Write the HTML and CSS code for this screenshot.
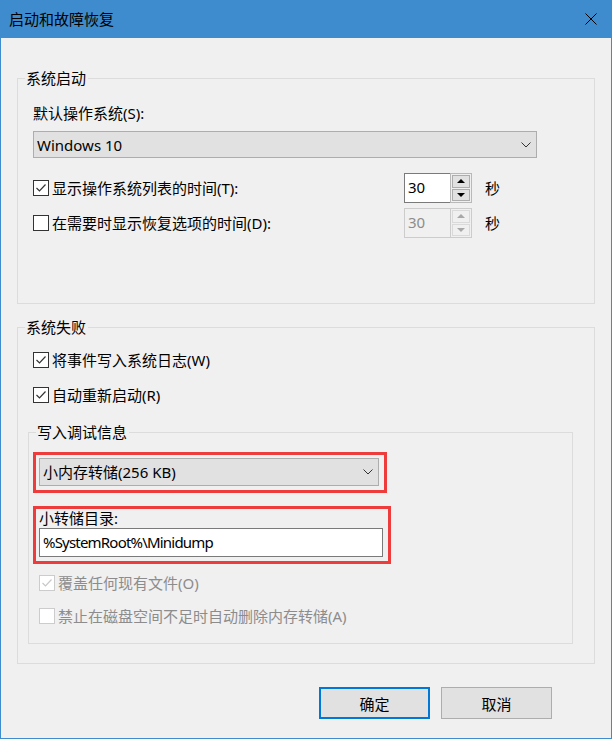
FILE: index.html
```html
<!DOCTYPE html>
<html lang="zh-CN">
<head>
<meta charset="utf-8">
<title>启动和故障恢复</title>
<link rel="stylesheet" href="styles.css">
</head>
<body>
<div class="window">
  <div class="titlebar">
    <span class="title">启动和故障恢复</span>
    <svg class="close" width="12" height="12" viewBox="0 0 12 12"><path d="M0.5 0.5L11.5 11.5M11.5 0.5L0.5 11.5" stroke="#000" stroke-width="1" fill="none"/></svg>
  </div>
  <div class="content">
    <section class="group">
      <div class="group-head"><span class="seg-l"></span><span class="legend">系统启动</span><span class="seg-r"></span></div>
      <div class="group-body g1-body">
        <div class="text-label">默认操作系统(S):</div>
        <div class="combo combo-os">
          <span>Windows 10</span>
          <svg class="chev" width="10" height="6" viewBox="0 0 10 6"><polyline points="0.5,0.5 5,5 9.5,0.5" stroke="#333" stroke-width="1" fill="none"/></svg>
        </div>
        <div class="spin-row first">
          <label class="cb">
            <span class="box"><svg width="14" height="14" viewBox="0 0 14 14"><polyline points="2.5,7 5.5,10 11.5,3.5" stroke="#333" stroke-width="1.2" fill="none"/></svg></span>
            <span>显示操作系统列表的时间(T):</span>
          </label>
          <div class="spinner">
            <div class="spin-text">30</div>
            <div class="spin-btns">
              <div class="spin-btn"><svg width="8" height="4" viewBox="0 0 8 4"><polygon points="0,4 4,0 8,4" fill="#000"/></svg></div>
              <div class="spin-btn"><svg width="8" height="4" viewBox="0 0 8 4"><polygon points="0,0 8,0 4,4" fill="#000"/></svg></div>
            </div>
          </div>
          <span class="unit">秒</span>
        </div>
        <div class="spin-row second">
          <label class="cb">
            <span class="box"></span>
            <span>在需要时显示恢复选项的时间(D):</span>
          </label>
          <div class="spinner disabled">
            <div class="spin-text">30</div>
            <div class="spin-btns">
              <div class="spin-btn"><svg width="8" height="4" viewBox="0 0 8 4"><polygon points="0,4 4,0 8,4" fill="#a8a8a8"/></svg></div>
              <div class="spin-btn"><svg width="8" height="4" viewBox="0 0 8 4"><polygon points="0,0 8,0 4,4" fill="#a8a8a8"/></svg></div>
            </div>
          </div>
          <span class="unit">秒</span>
        </div>
      </div>
    </section>

    <section class="group group-fail">
      <div class="group-head"><span class="seg-l"></span><span class="legend">系统失败</span><span class="seg-r"></span></div>
      <div class="group-body g2-body">
        <label class="cb row-a">
          <span class="box"><svg width="14" height="14" viewBox="0 0 14 14"><polyline points="2.5,7 5.5,10 11.5,3.5" stroke="#333" stroke-width="1.2" fill="none"/></svg></span>
          <span>将事件写入系统日志(W)</span>
        </label>
        <label class="cb row-b">
          <span class="box"><svg width="14" height="14" viewBox="0 0 14 14"><polyline points="2.5,7 5.5,10 11.5,3.5" stroke="#333" stroke-width="1.2" fill="none"/></svg></span>
          <span>自动重新启动(R)</span>
        </label>

        <section class="group inner">
          <div class="group-head"><span class="seg-l"></span><span class="legend">写入调试信息</span><span class="seg-r"></span></div>
          <div class="group-body inner-body">
            <div class="mark mark-combo">
              <div class="combo combo-dump">
                <span>小内存转储(256 KB)</span>
                <svg class="chev" width="10" height="6" viewBox="0 0 10 6"><polyline points="0.5,0.5 5,5 9.5,0.5" stroke="#333" stroke-width="1" fill="none"/></svg>
              </div>
            </div>
            <div class="mark mark-dir">
              <div class="dir-label">小转储目录:</div>
              <div class="textbox">%SystemRoot%\Minidump</div>
            </div>
            <label class="cb dis dis-a">
              <span class="box"><svg width="14" height="14" viewBox="0 0 14 14"><polyline points="2.5,7 5.5,10 11.5,3.5" stroke="#c8c8c8" stroke-width="1.2" fill="none"/></svg></span>
              <span>覆盖任何现有文件(O)</span>
            </label>
            <label class="cb dis dis-b">
              <span class="box"></span>
              <span>禁止在磁盘空间不足时自动删除内存转储(A)</span>
            </label>
          </div>
        </section>
      </div>
    </section>

    <div class="buttons">
      <button class="btn btn-ok">确定</button>
      <button class="btn">取消</button>
    </div>
  </div>
</div>
</body>
</html>
```

FILE: styles.css
```css
* { box-sizing: border-box; }

html, body {
  margin: 0;
  padding: 0;
  background: #f0f0f0;
}

body {
  font-family: "Noto Sans", "Noto Sans CJK SC", sans-serif;
  font-size: 15px;
  color: #000;
  line-height: 20px;
}

.window {
  width: 612px;
  height: 739px;
  border: 1px solid #3e8bcd;
  border-top: none;
  background: #f0f0f0;
  display: flex;
  flex-direction: column;
}

.titlebar {
  height: 38px;
  flex: none;
  background: #3e8bcd;
  display: flex;
  align-items: center;
  justify-content: space-between;
  padding: 0 14px 0 8px;
}

.title {
  font-size: 15px;
  line-height: 20px;
  color: #000;
}

.close { display: block; }

.content {
  padding: 30px 16px 0 16px;
}

/* group boxes */
.group-head {
  display: flex;
  height: 20px;
}

.seg-l {
  width: 8px;
  height: 10px;
  align-self: flex-end;
  border-top: 1px solid #dcdcdc;
  border-left: 1px solid #dcdcdc;
}

.seg-r {
  flex: 1;
  height: 10px;
  align-self: flex-end;
  border-top: 1px solid #dcdcdc;
  border-right: 1px solid #dcdcdc;
}

.legend {
  line-height: 20px;
  padding: 0 2px 0 1px;
}

.group-body {
  border: 1px solid #dcdcdc;
  border-top: none;
}

.g1-body {
  padding: 15px 0 65px 15px;
}

.text-label {
  line-height: 20px;
}

/* combo boxes */
.combo {
  display: flex;
  align-items: center;
  justify-content: space-between;
  background: #e1e1e1;
  border: 1px solid #adadad;
  padding: 0 5px 0 3px;
}

.combo-os {
  margin-top: 8px;
  width: 504px;
  height: 27px;
}

.chev { display: block; flex: none; }

/* checkbox */
.cb {
  display: flex;
  align-items: center;
  gap: 3px;
  height: 20px;
}

.box {
  width: 16px;
  height: 16px;
  flex: none;
  border: 1px solid #333;
  background: #fff;
  display: flex;
  align-items: center;
  justify-content: center;
}

.box svg { display: block; }

/* spinner rows */
.spin-row {
  display: grid;
  grid-template-columns: 371px 68px auto;
  align-items: center;
  height: 30px;
}

.spin-row.first { margin-top: 15px; }
.spin-row.second { margin-top: 5px; }

.spinner {
  display: flex;
  height: 30px;
  width: 68px;
}

.spin-text {
  width: 46px;
  height: 30px;
  border: 1px solid #7a7a7a;
  border-right: none;
  background: #fff;
  padding-left: 3px;
  line-height: 27px;
}

.spin-btns {
  width: 22px;
  height: 30px;
  border: 1px solid #b9b9b9;
  padding: 1px;
  display: flex;
  flex-direction: column;
  gap: 1px;
}

.spin-btn {
  flex: 1;
  background: #e1e1e1;
  border: 1px solid #adadad;
  display: flex;
  align-items: center;
  justify-content: center;
}

.spin-btn svg { display: block; }

.spinner.disabled .spin-text {
  background: #f0f0f0;
  border-color: #cccccc;
  color: #8c8c8c;
}

.spinner.disabled .spin-btns {
  border-color: #cccccc;
}

.spinner.disabled .spin-btn {
  background: #f0f0f0;
  border-color: #dadada;
}

.unit {
  margin-left: 13px;
}

/* system failure group */
.group-fail {
  margin-top: 13px;
}

.g2-body {
  padding: 13px 0 19px 10px;
}

.row-a { margin-left: 5px; }
.row-b { margin-left: 5px; margin-top: 15px; }

.inner {
  width: 545px;
  margin-top: 17px;
}

.inner-body {
  padding: 10px 0 17px 4px;
}

/* red annotation marks */
.mark {
  border: 3px solid #ee3b3b;
}

.mark-combo {
  width: 354px;
  height: 41px;
  padding: 3px 5px 4px 3px;
}

.combo-dump {
  width: 340px;
  height: 28px;
}

.mark-dir {
  width: 358px;
  height: 58px;
  margin-top: 13px;
  padding: 0 5px 4px 3px;
}

.dir-label {
  line-height: 19px;
  height: 19px;
}

.textbox {
  width: 344px;
  height: 29px;
  background: #fff;
  border: 1px solid #7a7a7a;
  padding-left: 3px;
  line-height: 27px;
  letter-spacing: -0.8px;
}

/* disabled checkboxes */
.cb.dis {
  margin-left: 6px;
  color: #8c8c8c;
}

.cb.dis .box {
  border-color: #cccccc;
  background: #fff;
}

.dis-a { margin-top: 9px; }
.dis-b { margin-top: 13px; }

/* buttons */
.buttons {
  display: flex;
  justify-content: flex-end;
  gap: 11px;
  margin-top: 23px;
  padding-right: 43px;
}

.btn {
  width: 111px;
  height: 32px;
  background: #e1e1e1;
  border: 1px solid #adadad;
  font-family: "Noto Sans", "Noto Sans CJK SC", sans-serif;
  font-size: 15px;
  color: #000;
  padding: 0;
  margin: 0;
}

.btn-ok {
  border: 2px solid #0078d7;
}
```
